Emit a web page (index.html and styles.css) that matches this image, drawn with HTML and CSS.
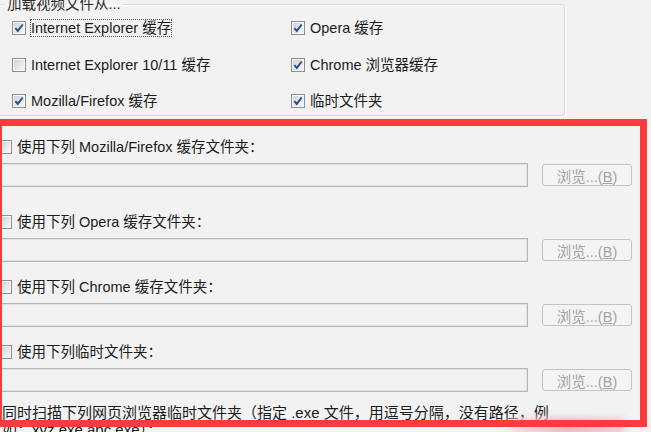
FILE: index.html
```html
<!DOCTYPE html>
<html lang="zh-CN">
<head>
  <meta charset="UTF-8">
  <title>加载视频文件</title>
  <link rel="stylesheet" href="styles.css">
</head>
<body>

  <div class="page">

    <fieldset class="source-group">
      <legend>加载视频文件从...</legend>
      <div class="source-grid">
        <label class="check">
          <span class="cb checked"><svg viewBox="0 0 12 12"><path d="M2.4 6.1 L4.8 8.9 L9.7 2.5"/></svg></span>
          <span class="check-text focused">Internet Explorer 缓存</span>
        </label>
        <label class="check">
          <span class="cb checked"><svg viewBox="0 0 12 12"><path d="M2.4 6.1 L4.8 8.9 L9.7 2.5"/></svg></span>
          <span class="check-text">Opera 缓存</span>
        </label>
        <label class="check">
          <span class="cb"></span>
          <span class="check-text">Internet Explorer 10/11 缓存</span>
        </label>
        <label class="check">
          <span class="cb checked"><svg viewBox="0 0 12 12"><path d="M2.4 6.1 L4.8 8.9 L9.7 2.5"/></svg></span>
          <span class="check-text">Chrome 浏览器缓存</span>
        </label>
        <label class="check">
          <span class="cb checked"><svg viewBox="0 0 12 12"><path d="M2.4 6.1 L4.8 8.9 L9.7 2.5"/></svg></span>
          <span class="check-text">Mozilla/Firefox 缓存</span>
        </label>
        <label class="check">
          <span class="cb checked"><svg viewBox="0 0 12 12"><path d="M2.4 6.1 L4.8 8.9 L9.7 2.5"/></svg></span>
          <span class="check-text">临时文件夹</span>
        </label>
      </div>
    </fieldset>

    <div class="folder-list">
      <div class="folder-option first">
        <label class="check"><span class="cb"></span><span class="check-text">使用下列 Mozilla/Firefox 缓存文件夹：</span></label>
        <div class="path-row">
          <input class="path-input" type="text" disabled>
          <button class="browse" disabled>浏览...(<u>B</u>)</button>
        </div>
      </div>
      <div class="folder-option">
        <label class="check"><span class="cb"></span><span class="check-text">使用下列 Opera 缓存文件夹：</span></label>
        <div class="path-row">
          <input class="path-input" type="text" disabled>
          <button class="browse" disabled>浏览...(<u>B</u>)</button>
        </div>
      </div>
      <div class="folder-option">
        <label class="check"><span class="cb"></span><span class="check-text">使用下列 Chrome 缓存文件夹：</span></label>
        <div class="path-row">
          <input class="path-input" type="text" disabled>
          <button class="browse" disabled>浏览...(<u>B</u>)</button>
        </div>
      </div>
      <div class="folder-option">
        <label class="check"><span class="cb"></span><span class="check-text">使用下列临时文件夹：</span></label>
        <div class="path-row">
          <input class="path-input" type="text" disabled>
          <button class="browse" disabled>浏览...(<u>B</u>)</button>
        </div>
      </div>
      <p class="scan-note">同时扫描下列网页浏览器临时文件夹（指定 .exe 文件，用逗号分隔，没有路径，例如：xyz.exe,abc.exe）：</p>
    </div>

    <!-- annotation drawn over the dialog -->
    <div class="smudge"></div>
    <div class="highlight"></div>

  </div>

</body>
</html>
```

FILE: styles.css
```css
body {
  margin: 0;
  background: #f2f2f2;
  color: #1c1c1c;
  font-family: "Liberation Sans", "Noto Sans CJK SC", sans-serif;
  font-size: 14.5px;
  overflow: hidden;
}

.page {
  position: relative;
  width: 651px;
  height: 432px;
  overflow: hidden;
}

/* top group box */
.source-group {
  box-sizing: border-box;
  width: 575px;
  margin: -4px 0 0 -10px;
  padding: 7px 0 5px 21px;
  border: 1px solid #d5dadd;
  border-radius: 3px;
  box-shadow: inset 1px 1px 0 #fff, 1px 1px 0 #fff;
}

.source-group legend {
  margin-left: -7px;
  padding: 0 2px;
  line-height: 16px;
  color: #2a2a2a;
}

.source-grid {
  display: grid;
  grid-template-columns: 279px 1fr;
  grid-auto-rows: 18px;
  row-gap: 18.5px;
}

/* checkbox rows */
.check {
  display: flex;
  align-items: center;
  gap: 5px;
  height: 18px;
  white-space: nowrap;
}

.check-text {
  line-height: 16px;
  border: 1px solid transparent;
  margin-left: -1px;
}

.check-text.focused {
  border: 1px dotted #555;
}

.cb {
  flex: none;
  box-sizing: border-box;
  width: 14px;
  height: 14px;
  border: 1px solid #8e8f8f;
  background: linear-gradient(135deg, #cdd0d5, #f9f9f9);
  box-shadow: inset 0 0 0 1px #f6f6f6;
}

.cb svg {
  display: block;
  width: 12px;
  height: 12px;
}

.cb svg path {
  fill: none;
  stroke: #2b4f8c;
  stroke-width: 2;
}

/* folder options */
.folder-list {
  margin-left: -2px;
  padding-top: 22px;
}

.folder-option {
  margin-bottom: 16px;
}

.folder-option.first {
  margin-bottom: 26px;
}

.folder-option .check {
  margin-bottom: 7px;
}

.path-row {
  display: flex;
  align-items: center;
  gap: 14px;
  margin-left: -9px;
}

.path-input {
  box-sizing: border-box;
  width: 539px;
  height: 24px;
  margin: 0;
  border: 1px solid #b4b7b9;
  box-shadow: inset 0 0 0 1px #e2e2e2;
  background: #f2f2f2;
}

.browse {
  box-sizing: border-box;
  width: 90px;
  height: 22px;
  margin: 0;
  padding: 0;
  border: 1px solid #c4c4c4;
  border-radius: 3px;
  background: #f4f4f4;
  color: #a4a4a4;
  font-family: inherit;
  font-size: 14.5px;
}

.scan-note {
  width: 552px;
  margin: -4px 0 0 4px;
  line-height: 17px;
  font-size: 15px;
}

/* red annotation */
.highlight {
  position: absolute;
  left: -5px;
  top: 119px;
  box-sizing: border-box;
  width: 652px;
  height: 308px;
  border: 7px solid #fb3b3c;
}

.smudge {
  position: absolute;
  left: 510px;
  top: 418px;
  width: 115px;
  height: 16px;
  background: linear-gradient(90deg, #f4dce0, #e9b3bb, #f0cdd2);
  filter: blur(3px);
}
```
